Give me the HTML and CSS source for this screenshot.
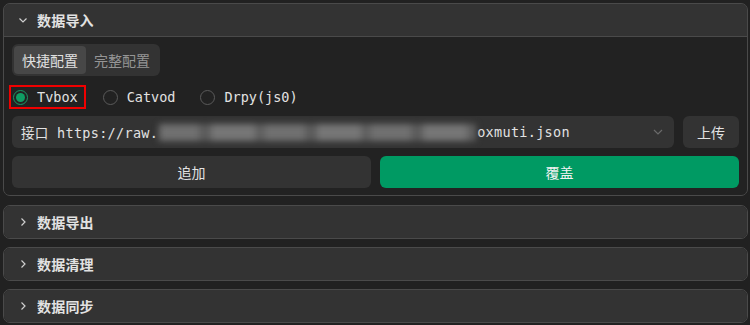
FILE: index.html
```html
<!DOCTYPE html>
<html lang="zh">
<head>
<meta charset="utf-8">
<link rel="stylesheet" href="styles.css">
</head>
<body>
<div class="page">
  <section class="panel open">
    <div class="panel-head">
      <svg class="chev" width="10" height="10" viewBox="0 0 10 10"><path d="M1.5 3.5 L5 7 L8.5 3.5" fill="none" stroke="#cfcfcf" stroke-width="1.2"/></svg>
      <span class="title">数据导入</span>
    </div>
    <div class="panel-body">
      <div class="seg">
        <span class="tab active">快捷配置</span>
        <span class="tab">完整配置</span>
      </div>
      <div class="radios">
        <label class="radio marked"><span class="dot on"></span><span class="rl">Tvbox</span></label>
        <label class="radio"><span class="dot"></span><span class="rl">Catvod</span></label>
        <label class="radio"><span class="dot"></span><span class="rl">Drpy(js0)</span></label>
      </div>
      <div class="row">
        <div class="input">
          <span class="val">接口 https://raw.</span><span class="blur"></span><span class="val">oxmuti.json</span>
          <svg class="ichev" width="12" height="10" viewBox="0 0 12 10"><path d="M2 3 L6 7 L10 3" fill="none" stroke="#6a6a6a" stroke-width="1.2"/></svg>
        </div>
        <button class="btn up">上传</button>
      </div>
      <div class="actions">
        <button class="btn">追加</button>
        <button class="btn primary">覆盖</button>
      </div>
    </div>
  </section>
  <section class="panel">
    <div class="panel-head">
      <svg class="chev" width="10" height="10" viewBox="0 0 10 10"><path d="M3.5 1.5 L7 5 L3.5 8.5" fill="none" stroke="#cfcfcf" stroke-width="1.2"/></svg>
      <span class="title">数据导出</span>
    </div>
  </section>
  <section class="panel">
    <div class="panel-head">
      <svg class="chev" width="10" height="10" viewBox="0 0 10 10"><path d="M3.5 1.5 L7 5 L3.5 8.5" fill="none" stroke="#cfcfcf" stroke-width="1.2"/></svg>
      <span class="title">数据清理</span>
    </div>
  </section>
  <section class="panel">
    <div class="panel-head">
      <svg class="chev" width="10" height="10" viewBox="0 0 10 10"><path d="M3.5 1.5 L7 5 L3.5 8.5" fill="none" stroke="#cfcfcf" stroke-width="1.2"/></svg>
      <span class="title">数据同步</span>
    </div>
  </section>
</div>
</body>
</html>
```
FILE: styles.css
```css
* { box-sizing: border-box; }
html, body { margin: 0; padding: 0; background: #212121; }
body {
  font-family: "DejaVu Sans Mono", "Noto Sans CJK SC", monospace;
  color: #e6e6e6;
  font-size: 13.5px;
}
.page {
  padding: 3px 2px 0 3px;
  display: flex;
  flex-direction: column;
  gap: 8px;
}
.panel {
  border: 1px solid #4a4a4a;
  border-radius: 7px;
  background: #333333;
  overflow: hidden;
}
.panel.open { margin-bottom: 1px; }
.panel-head {
  height: 32px;
  display: flex;
  align-items: center;
  padding-left: 14px;
  background: #333333;
}
.open .panel-head { border-bottom: 1px solid #4a4a4a; height: 33px; }
.chev { flex: none; }
.title {
  margin-left: 9px;
  font-family: "Noto Sans CJK SC", sans-serif;
  font-size: 14px;
  font-weight: 700;
  color: #e2e2e2;
  letter-spacing: 0.2px;
}
.panel-body {
  background: #222222;
  padding: 7px 8px 7px 8px;
  display: flex;
  flex-direction: column;
}
.seg {
  align-self: flex-start;
  display: flex;
  padding: 2px;
  background: #333333;
  border-radius: 6px;
  height: 32px;
}
.tab {
  width: 72px;
  display: flex;
  align-items: center;
  justify-content: center;
  font-family: "Noto Sans CJK SC", sans-serif;
  font-size: 14px;
  color: #959595;
  border-radius: 4px;
}
.tab.active { background: #474747; color: #e0e0e0; }
.radios {
  display: flex;
  align-items: center;
  height: 24px;
  margin-top: 9px;
  margin-left: -3px;
}
.radio {
  display: flex;
  align-items: center;
  height: 24px;
  padding: 0 6px 0 2px;
  margin-right: 13px;
  border: 2px solid transparent;
}
.radio.marked { border-color: #f00000; }
.dot {
  width: 15px;
  height: 15px;
  border-radius: 50%;
  border: 1px solid #5a5a5a;
  margin-right: 9px;
  display: flex;
  align-items: center;
  justify-content: center;
}
.dot.on { border-color: #1a9966; }
.dot.on::after {
  content: "";
  width: 9px;
  height: 9px;
  border-radius: 50%;
  background: #0f9d63;
}
.rl { color: #e2e2e2; }
.row {
  display: flex;
  gap: 9px;
  margin-top: 7px;
  height: 32px;
}
.input {
  flex: 1;
  background: #333333;
  border-radius: 6px;
  display: flex;
  align-items: center;
  padding-left: 9px;
  overflow: hidden;
}
.val { white-space: pre; color: #e2e2e2; letter-spacing: 0.3px; }
.blur {
  display: inline-block;
  width: 317px;
  height: 17px;
  margin: 0 1px;
  background: repeating-linear-gradient(90deg, #707070 0 40px, #5c5c5c 40px 52px, #767676 52px 96px, #606060 96px 106px);
  filter: blur(3px);
}
.ichev { margin-left: auto; margin-right: 10px; }
.btn {
  border: none;
  border-radius: 6px;
  background: #333333;
  color: #e2e2e2;
  font-family: "Noto Sans CJK SC", sans-serif;
  font-size: 14px;
  height: 32px;
  padding: 0;
}
.btn.up { width: 56px; }
.actions {
  display: flex;
  gap: 9px;
  margin-top: 8px;
}
.actions .btn { flex: 1; }
.btn.primary { background: #009a63; color: #f2f2f2; }
```
